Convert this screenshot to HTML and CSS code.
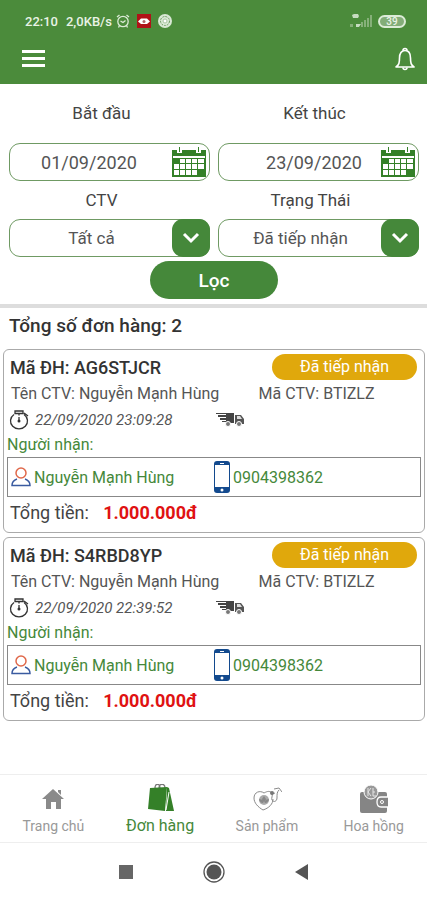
FILE: index.html
```html
<!DOCTYPE html>
<html lang="vi">
<head>
    <meta charset="UTF-8">
    <meta name="viewport" content="width=device-width, initial-scale=1.0">
    <title>Đơn hàng</title>
    <link rel="stylesheet" href="styles.css">
</head>
<body>
    <!-- shared icons -->
    <svg class="sprite" aria-hidden="true">
        <symbol id="calendar" viewBox="0 0 34 30">
            <path fill="#348028" d="M0 3h34v27H0z"/>
            <path fill="#fff" d="M1 9h32v2H1zM8 12h5v4H8zM14 12h5v4h-5zM20 12h5v4h-5zM26 12h6v4h-6zM2 17h5v5H2zM8 17h5v5H8zM14 17h5v5h-5zM20 17h5v5h-5zM26 17h6v5h-6zM2 23h5v5H2zM8 23h5v5H8zM14 23h5v5h-5zM20 23h5v5h-5z"/>
            <path fill="#fff" d="M5 1h5v5H5zM24 1h5v5h-5z"/>
            <path fill="#348028" d="M7 0h1v5H7zM26 0h1v5h-1z"/>
        </symbol>
        <symbol id="stopwatch" viewBox="0 0 20 20">
            <g fill="none" stroke="#333" stroke-width="1.3">
                <path d="M5 4.500A8.500 8 0 1 0 15 4.500M6 1h8v2.500H6zM10 3.500v2M15 3l4 3M10 7v4"/>
            </g>
            <circle cx="10" cy="11" r="1.500" fill="#333"/>
        </symbol>
        <symbol id="truck" viewBox="0 0 28 16">
            <path fill="#444" d="M0 1h18v10h-8v-1H6V9h4V8H4V6h6V5H2V3h8V2H0z"/>
            <path fill="#555" d="M19 3h6l3 4v5h-9z"/>
            <path fill="#ddd" d="M21 4h3l2 3h-5z"/>
            <g fill="#777" stroke="#fff">
                <circle cx="12" cy="12" r="2.500"/>
                <circle cx="23" cy="12" r="2.500"/>
            </g>
        </symbol>
        <symbol id="person" viewBox="0 0 20 20">
            <circle cx="10" cy="6" r="5" fill="none" stroke="#e0684a" stroke-width="1.500"/>
            <path fill="none" stroke="#3a5ba0" stroke-width="1.500" d="M6 12c-3 1-5 3-5 6.500h18c0-3.500-2-5.500-5-6.500"/>
        </symbol>
        <symbol id="phone" viewBox="0 0 16 32">
            <rect width="16" height="32" rx="3" fill="#134a8e"/>
            <path fill="#fff" d="M1 4h14v22H1zM6 2h4v1H6z"/>
            <circle cx="8" cy="29" r="1.500" fill="#fff"/>
        </symbol>
    </svg>

    <header class="header">
        <div class="status-bar">
            <span class="clock">22:10</span>
            <span class="speed">2,0KB/s</span>
            <svg class="status-icon" viewBox="0 0 14 14">
                <g fill="none" stroke="#dcebd7" stroke-width="1.300">
                    <circle cx="7" cy="7.500" r="5.200"/>
                    <path d="M1 3l2.500-2M13 3l-2.500-2M4.500 7L7 8.500 9.500 6.500M3.500 11.500l-1 2M10.500 11.500l1 2"/>
                </g>
            </svg>
            <svg class="status-icon" viewBox="0 0 14 14">
                <path fill="#b01217" d="M0 0h14v14H0z"/>
                <path fill="#fff" d="M1 7.500l3-3h6l3 3-3 2.500H4z"/>
                <circle cx="7" cy="7.500" r="1.500" fill="#b5676a"/>
            </svg>
            <svg class="status-icon" viewBox="0 0 14 14">
                <circle cx="7" cy="7" r="7" fill="#d9e8d4"/>
                <circle cx="7" cy="7" r="4.500" fill="none" stroke="#6b9c5f" stroke-dasharray="2 1"/>
                <circle cx="7" cy="7" r="2" fill="#fff" stroke="#a9c6a1"/>
            </svg>
            <svg class="signal" viewBox="0 0 24 16">
                <path fill="#c6dcc0" d="M4 2l2-1h4l1 2-1 2H5zM8 11h5l-2 3H8z"/>
                <path fill="#86b079" d="M2 11h3v3H2zM13 9h2v5h-2zM16 7h2v7h-2zM19 5h2v9h-2zM22 2h2v12h-2z"/>
            </svg>
            <span class="battery">39</span>
        </div>
        <div class="toolbar">
            <button class="icon-button" aria-label="Menu">
                <svg width="23" height="17" viewBox="0 0 23 17">
                    <path fill="#fff" d="M0 0h23v3H0zM0 7h23v3H0zM0 14h23v3H0z"/>
                </svg>
            </button>
            <button class="icon-button" aria-label="Thông báo">
                <svg width="20" height="24" viewBox="0 0 20 24">
                    <g fill="none" stroke="#fff" stroke-width="1.600" stroke-linejoin="round">
                        <path d="M1 20c3-2 3.500-4 3.500-9 0-4.500 2-7.500 5.500-7.500s5.500 3 5.500 7.500c0 5 .5 7 3.500 9z"/>
                        <path d="M8 3.500a2 2 0 0 1 4 0M8 20.500a2 2 0 0 0 4 0"/>
                    </g>
                </svg>
            </button>
        </div>
    </header>

    <main>
        <form class="filter">
            <div class="fields">
                <div class="field">
                    <label for="start">Bắt đầu</label>
                    <div class="control control-date">
                        <input id="start" type="text" value="01/09/2020">
                        <svg class="calendar"><use href="#calendar"/></svg>
                    </div>
                </div>
                <div class="field field-end">
                    <label for="end">Kết thúc</label>
                    <div class="control control-date">
                        <input id="end" type="text" value="23/09/2020">
                        <svg class="calendar"><use href="#calendar"/></svg>
                    </div>
                </div>
                <div class="field">
                    <label for="ctv">CTV</label>
                    <div class="control">
                        <select id="ctv">
                            <option>Tất cả</option>
                        </select>
                        <span class="arrow">
                            <svg width="18" height="12" viewBox="0 0 18 12"><path d="M2 2l7 7 7-7"/></svg>
                        </span>
                    </div>
                </div>
                <div class="field">
                    <label for="status">Trạng Thái</label>
                    <div class="control">
                        <select id="status">
                            <option>Đã tiếp nhận</option>
                        </select>
                        <span class="arrow">
                            <svg width="18" height="12" viewBox="0 0 18 12"><path d="M2 2l7 7 7-7"/></svg>
                        </span>
                    </div>
                </div>
            </div>
            <button class="submit" type="button">Lọc</button>
        </form>

        <h1 class="total-orders">Tổng số đơn hàng: 2</h1>

        <div class="orders">
            <article class="order">
                <div class="order-head">
                    <h2>Mã ĐH: AG6STJCR</h2>
                    <span class="badge">Đã tiếp nhận</span>
                </div>
                <div class="order-ctv">
                    <span>Tên CTV: Nguyễn Mạnh Hùng</span>
                    <span>Mã CTV: BTIZLZ</span>
                </div>
                <div class="order-time">
                    <svg class="stopwatch"><use href="#stopwatch"/></svg>
                    <time>22/09/2020 23:09:28</time>
                    <svg class="truck"><use href="#truck"/></svg>
                </div>
                <div class="order-label">Người nhận:</div>
                <div class="receiver">
                    <svg class="person"><use href="#person"/></svg>
                    <span>Nguyễn Mạnh Hùng</span>
                    <svg class="phone"><use href="#phone"/></svg>
                    <span>0904398362</span>
                </div>
                <div class="order-total">Tổng tiền: <strong>1.000.000đ</strong></div>
            </article>

            <article class="order">
                <div class="order-head">
                    <h2>Mã ĐH: S4RBD8YP</h2>
                    <span class="badge">Đã tiếp nhận</span>
                </div>
                <div class="order-ctv">
                    <span>Tên CTV: Nguyễn Mạnh Hùng</span>
                    <span>Mã CTV: BTIZLZ</span>
                </div>
                <div class="order-time">
                    <svg class="stopwatch"><use href="#stopwatch"/></svg>
                    <time>22/09/2020 22:39:52</time>
                    <svg class="truck"><use href="#truck"/></svg>
                </div>
                <div class="order-label">Người nhận:</div>
                <div class="receiver">
                    <svg class="person"><use href="#person"/></svg>
                    <span>Nguyễn Mạnh Hùng</span>
                    <svg class="phone"><use href="#phone"/></svg>
                    <span>0904398362</span>
                </div>
                <div class="order-total">Tổng tiền: <strong>1.000.000đ</strong></div>
            </article>
        </div>
    </main>

    <nav class="tabs">
        <a href="#home">
            <svg viewBox="0 0 30 30">
                <path fill="#8a8a8a" d="M15 5l11 10h-3v10h-5v-7h-5v7H8V15H4zM20 6h3v5l-3-3z"/>
            </svg>
            <span>Trang chủ</span>
        </a>
        <a href="#orders" class="active">
            <svg viewBox="0 0 30 30">
                <path fill="none" stroke="#777" stroke-width="1.300" d="M10 4c0-5 5-5 5 0M14 4c0-5 6-5 6 0"/>
                <path fill="#348028" d="M5 4l17-1-2 24-17-2z"/>
                <path fill="#348028" d="M22 3l2 1 5 23h-8z"/>
                <path stroke="#fff" d="M24 8l-3 18"/>
            </svg>
            <span>Đơn hàng</span>
        </a>
        <a href="#products">
            <svg viewBox="0 0 30 30">
                <g fill="none" stroke="#8a8a8a">
                    <path d="M20 9c-3-3-6-1-8 0-4-3-10-1-10 5 0 5 4 9 9 12 6-2 10-6 10-11"/>
                    <path d="M20 9c1 3-1 5 0 7 2 3 5 1 5-2 0-4 0-6 2-8M22 5l5-1 3 4M23 9l-3 1"/>
                </g>
                <circle cx="12" cy="16" r="5" fill="#aaa"/>
                <path fill="#888" d="M12 12l2 3-2 4-2-4zM7 15l4 1v3c-2 0-4-2-4-4zM17 15l-4 1v3c2 0 4-2 4-4z"/>
                <circle cx="20" cy="9" r="2" fill="#777"/>
            </svg>
            <span>Sản phẩm</span>
        </a>
        <a href="#commission">
            <svg viewBox="0 0 30 30">
                <path fill="#858585" d="M3 8h23q2 0 2 2v17q0 2-2 2H3q-2 0-2-2V10q0-2 2-2z"/>
                <path fill="#858585" stroke="#fff" stroke-width="1.300" d="M29 13h-7q-4 0-4 5t4 5h7"/>
                <circle cx="23" cy="18" r="1.500" fill="none" stroke="#fff"/>
                <circle cx="12" cy="8" r="7" fill="#999" stroke="#fff"/>
                <path fill="none" stroke="#e5e5e5" d="M9 4v8M9 8l3-4M9 8l3 4M14 4v8h3M14 8h2"/>
            </svg>
            <span>Hoa hồng</span>
        </a>
    </nav>

    <footer class="system-bar">
        <button aria-label="Recent">
            <svg viewBox="0 0 22 22"><path fill="#666" d="M4 4h14v14H4z"/></svg>
        </button>
        <button aria-label="Home">
            <svg viewBox="0 0 22 22">
                <circle cx="11" cy="11" r="10" fill="none" stroke="#555" stroke-width="1.300"/>
                <circle cx="11" cy="11" r="7.500" fill="#555"/>
            </svg>
        </button>
        <button aria-label="Back">
            <svg viewBox="0 0 22 22"><path fill="#555" d="M17 3v16L4 11z"/></svg>
        </button>
    </footer>
</body>
</html>
```

FILE: styles.css
```css
* {
    box-sizing: border-box;
}

body {
    display: flex;
    flex-direction: column;
    min-height: 100vh;
    margin: 0;
    font-family: Roboto, "Liberation Sans", sans-serif;
    font-size: 16px;
    color: #444;
    background-color: #fff;
}

h1, h2 {
    margin: 0;
}

button {
    padding: 0;
    border: none;
    background: none;
    font-family: inherit;
    cursor: pointer;
}

svg {
    display: block;
    flex-shrink: 0;
}

.sprite {
    position: absolute;
    width: 0;
    height: 0;
}

/* Header */
.header {
    background-color: #4b8b3b;
    color: #fff;
    padding-bottom: 9px;
}

.status-bar {
    display: flex;
    align-items: center;
    height: 42px;
    padding: 0 21px 0 25px;
    font-size: 13px;
    font-weight: 500;
    color: #e9f3e6;
}

.speed {
    margin: 0 4px 0 8px;
}

.status-icon {
    width: 14px;
    height: 14px;
    margin-right: 7px;
}

.signal {
    width: 24px;
    height: 16px;
    margin: 0 6px 0 auto;
}

.battery {
    width: 28px;
    height: 13px;
    border: 2px solid #dcebd7;
    border-radius: 7px;
    background-color: #83ad78;
    font-size: 10px;
    line-height: 9px;
    text-align: center;
}

.toolbar {
    display: flex;
    justify-content: space-between;
    align-items: center;
    height: 33px;
    padding: 0 12px 0 22px;
}

/* Filter */
.filter {
    padding: 16px 8px 5px 9px;
    border-bottom: 4px solid #ddd;
}

.fields {
    display: grid;
    grid-template-columns: repeat(2, minmax(0, 1fr));
    column-gap: 8px;
}

.field label {
    display: block;
    height: 38px;
    padding-right: 16px;
    font-size: 17px;
    line-height: 38px;
    text-align: center;
}

.field:nth-child(1) label,
.field:nth-child(2) label {
    height: 43px;
    line-height: 26px;
}

.field-end label {
    padding-right: 8px;
}

.control {
    display: flex;
    align-items: center;
    height: 38px;
    border: 1px solid #6f9a63;
    border-radius: 11px;
}

.control input,
.control select {
    flex: 1;
    min-width: 0;
    height: 100%;
    padding: 0;
    border: none;
    outline: none;
    background: none;
    appearance: none;
    font-family: inherit;
    font-size: 17px;
    color: #555;
    text-align: center;
    text-align-last: center;
}

.control-date input {
    padding-right: 4px;
    font-size: 18px;
}

.field-end input {
    padding-left: 32px;
}

.calendar {
    width: 34px;
    height: 30px;
    margin-right: 3px;
}

.arrow {
    display: flex;
    align-items: center;
    justify-content: center;
    width: 38px;
    height: 38px;
    margin: -1px;
    border-radius: 11px;
    background-color: #45883a;
}

.arrow path {
    fill: none;
    stroke: #fff;
    stroke-width: 3;
}

.submit {
    display: block;
    width: 128px;
    height: 38px;
    margin: 4px auto 0;
    border-radius: 19px;
    background-color: #45883a;
    color: #fff;
    font-size: 19px;
    font-weight: 500;
}

.total-orders {
    padding: 0 9px;
    font-size: 19px;
    font-weight: 500;
    line-height: 36px;
    color: #333;
}

/* Orders */
.orders {
    display: flex;
    flex-direction: column;
    gap: 4px;
    padding: 5px 2px 0 3px;
}

.order {
    padding: 3px;
    border: 1px solid #aaa;
    border-radius: 6px;
}

.order-head {
    display: flex;
    align-items: center;
    justify-content: space-between;
    height: 27px;
    padding: 0 4px 0 3px;
}

.order-head h2 {
    padding-top: 3px;
    font-size: 18px;
    font-weight: 500;
    line-height: 22px;
    color: #333;
}

.badge {
    width: 145px;
    border-radius: 13px;
    background-color: #e0a80c;
    color: #fff;
    line-height: 26px;
    text-align: center;
}

.order-ctv {
    display: grid;
    grid-template-columns: 3fr 2fr;
    column-gap: 4px;
    padding-left: 4px;
    line-height: 28px;
    color: #555;
}

.order-time {
    display: flex;
    align-items: center;
    height: 24px;
    padding-left: 2px;
}

.order-time time {
    width: 181px;
    margin-left: 6px;
    font-size: 15px;
    font-style: italic;
    color: #555;
}

.stopwatch {
    width: 20px;
    height: 20px;
}

.truck {
    width: 28px;
    height: 16px;
}

.order-label {
    line-height: 25px;
    color: #45883a;
}

.receiver {
    display: flex;
    align-items: center;
    height: 40px;
    padding-left: 3px;
    border: 1px solid #888;
    color: #45883a;
}

.receiver span:first-of-type {
    width: 180px;
}

.person {
    width: 20px;
    height: 20px;
    margin-right: 3px;
}

.phone {
    width: 16px;
    height: 32px;
    margin-right: 3px;
}

.order-total {
    padding-left: 3px;
    font-size: 18px;
    line-height: 32px;
}

.order-total strong {
    margin-left: 10px;
    color: #e01212;
}

/* Bottom bars */
.tabs {
    display: grid;
    grid-template-columns: repeat(4, 1fr);
    height: 69px;
    margin-top: auto;
    border-top: 1px solid #eee;
    border-bottom: 1px solid #eee;
}

.tabs a {
    display: flex;
    flex-direction: column;
    align-items: center;
    padding-top: 9px;
    color: #999;
    font-size: 14px;
    line-height: 24px;
    text-decoration: none;
}

.tabs svg {
    width: 30px;
    height: 30px;
}

.tabs .active {
    color: #45883a;
    font-size: 16px;
}

.system-bar {
    display: flex;
    justify-content: center;
    align-items: center;
    gap: 66px;
    height: 57px;
}

.system-bar svg {
    width: 22px;
    height: 22px;
}
```
